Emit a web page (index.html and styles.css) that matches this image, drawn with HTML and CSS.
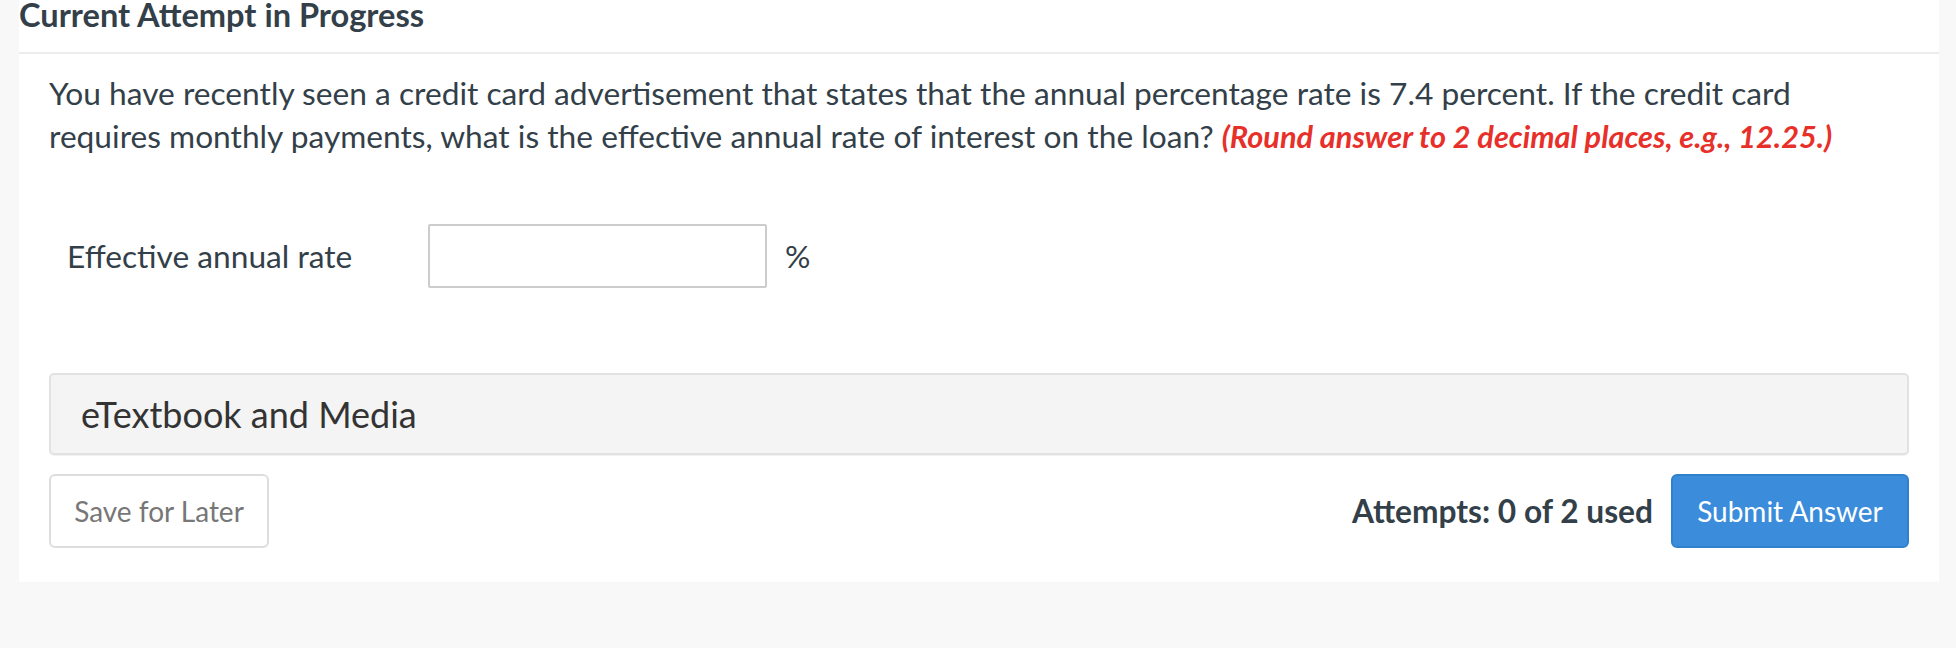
FILE: index.html
```html
<!DOCTYPE html>
<html>
<head>
<meta charset="utf-8">
<link rel="stylesheet" href="styles.css">
</head>
<body>
<div class="panel">
  <h2 class="title">Current Attempt in Progress</h2>
  <hr class="rule">
  <div class="content">
    <p class="question">You have recently seen a credit card advertisement that states that the annual percentage rate is 7.4 percent. If the credit card requires monthly payments, what is the effective annual rate of interest on the loan? <em class="hint">(Round answer to 2 decimal places, e.g., 12.25.)</em></p>
    <div class="answer-row">
      <label class="answer-label">Effective annual rate</label>
      <input class="answer-input" type="text">
      <span class="unit">%</span>
    </div>
    <div class="media-box">eTextbook and Media</div>
    <div class="actions">
      <button class="btn btn-save">Save for Later</button>
      <div class="actions-right">
        <span class="attempts">Attempts: 0 of 2 used</span>
        <button class="btn btn-submit">Submit Answer</button>
      </div>
    </div>
  </div>
</div>
</body>
</html>
```
FILE: styles.css
```css
html, body {
  margin: 0;
  padding: 0;
  background: #f8f8f8;
  font-family: Lato, "Liberation Sans", sans-serif;
  color: #333f49;
}
.panel {
  margin-left: 19px;
  width: 1920px;
  background: #fff;
  padding-bottom: 34px;
}
.title {
  margin: 0;
  font-size: 32.6px;
  font-weight: 700;
  line-height: 30px;
  color: #333f49;
  white-space: nowrap;
}
.rule {
  margin: 22px 0 0 0;
  border: 0;
  height: 2px;
  background: #ececec;
}
.content {
  padding: 0 30px;
}
.question {
  margin: 18px 0 0 0;
  font-size: 31.7px;
  line-height: 43.2px;
}
.hint {
  color: #e8302a;
  font-weight: 700;
  font-style: italic;
  font-size: 30.7px;
}
.answer-row {
  display: flex;
  align-items: center;
  margin-top: 66px;
  padding-left: 18px;
}
.answer-label {
  flex: none;
  width: 361px;
  font-size: 31.7px;
}
.answer-input {
  flex: none;
  box-sizing: border-box;
  width: 339px;
  height: 64px;
  margin: 0;
  border: 2px solid #cccccc;
  border-radius: 2px;
  background: #fff;
  font: inherit;
}
.unit {
  margin-left: 18px;
  font-size: 31.7px;
}
.media-box {
  margin-top: 85px;
  box-sizing: border-box;
  height: 82px;
  border: 2px solid #e2e2e2;
  border-radius: 5px;
  background: #f4f4f4;
  padding-left: 30px;
  font-size: 36px;
  line-height: 78px;
  color: #333;
  box-shadow: 0 1px 1px rgba(0,0,0,0.06);
}
.actions {
  display: flex;
  justify-content: space-between;
  align-items: center;
  margin-top: 19px;
}
.actions-right {
  display: flex;
  align-items: center;
  gap: 18px;
}
.btn {
  box-sizing: border-box;
  height: 74px;
  border-radius: 6px;
  font-family: Lato, "Liberation Sans", sans-serif;
  font-size: 28px;
  margin: 0;
  padding: 0;
}
.btn-save {
  width: 220px;
  background: #fff;
  border: 2px solid #dddddd;
  color: #777;
}
.btn-submit {
  width: 238px;
  background: #3b8ddb;
  border: 2px solid #3080cc;
  color: #fff;
}
.attempts {
  font-size: 31.7px;
  font-weight: 700;
  color: #333f49;
}
```
